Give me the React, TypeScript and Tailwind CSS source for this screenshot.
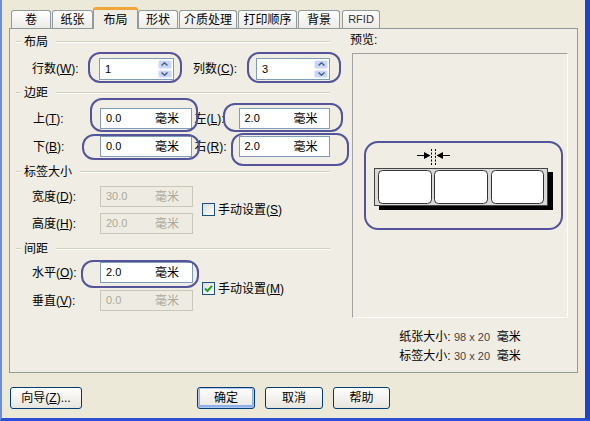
function U({ children }: { children: string }) {
  return <span className="underline">{children}</span>;
}

function Label({ cn, k, className = "" }: { cn: string; k: string; className?: string }) {
  return (
    <span className={"shrink-0 whitespace-nowrap " + className}>
      {cn}(<U>{k}</U>):
    </span>
  );
}

function GroupHeader({ title }: { title: string }) {
  return (
    <div className="flex items-center h-[14px]">
      <div className="w-[5px] h-[2px] border-t border-b border-t-[#D0D0BF] border-b-white" />
      <span className="mx-[3px] leading-[14px]">{title}</span>
      <div className="flex-1 ml-[5px] h-[2px] border-t border-b border-t-[#D0D0BF] border-b-white" />
    </div>
  );
}

function MmInput({ value, disabled = false, width = "w-[93px]" }: { value: string; disabled?: boolean; width?: string }) {
  return (
    <div
      className={
        "flex items-center h-[21px] border text-[11px] " +
        width +
        (disabled ? " bg-[#EEECE2] border-[#C9C7BA] text-[#ACA899]" : " bg-white border-[#7F9DB9] text-black")
      }
    >
      <span className="w-[54px] pl-[5px]">{value}</span>
      <span className="text-[12px]">毫米</span>
    </div>
  );
}

function Spinner({ value, width }: { value: string; width: string }) {
  return (
    <div className={"flex items-center h-[22px] border border-[#7F9DB9] bg-white " + width}>
      <span className="flex-1 pl-[5px] text-[11px]">{value}</span>
      <div className="flex flex-col w-[15px] h-full py-px pr-px gap-px">
        <div className="flex-1 bg-[#C8D7F8] border border-[#E6EEFC] rounded-[2px] flex items-center justify-center">
          <svg width="7" height="4" viewBox="0 0 7 4">
            <path d="M0.5 3.5 L3.5 0.8 L6.5 3.5" fill="none" stroke="#4D6185" strokeWidth="1.5" />
          </svg>
        </div>
        <div className="flex-1 bg-[#C8D7F8] border border-[#E6EEFC] rounded-[2px] flex items-center justify-center">
          <svg width="7" height="4" viewBox="0 0 7 4">
            <path d="M0.5 0.5 L3.5 3.2 L6.5 0.5" fill="none" stroke="#4D6185" strokeWidth="1.5" />
          </svg>
        </div>
      </div>
    </div>
  );
}

function CheckBox({ checked, text, k }: { checked: boolean; text: string; k: string }) {
  return (
    <div className="flex items-center gap-[3px]">
      <div className="w-[13px] h-[13px] border border-[#1C5180] bg-gradient-to-br from-[#DCDCD7] to-white flex items-center justify-center">
        {checked && (
          <svg width="9" height="9" viewBox="0 0 9 9">
            <path d="M1 4.5 L3.5 7 L8 1.8" fill="none" stroke="#21A121" strokeWidth="2" />
          </svg>
        )}
      </div>
      <span className="whitespace-nowrap">
        {text}(<U>{k}</U>)
      </span>
    </div>
  );
}

function Button({ children, isDefault = false, width = "w-[58px]" }: { children: React.ReactNode; isDefault?: boolean; width?: string }) {
  return (
    <button
      type="button"
      className={
        "h-[22px] rounded-[3px] border border-[#003C74] bg-gradient-to-b from-white to-[#E6E5DE] flex items-center justify-center " +
        width +
        (isDefault ? " shadow-[inset_0_0_0_1px_#B0C8F2,inset_0_-1px_0_2px_#8EB0EA]" : "")
      }
    >
      {children}
    </button>
  );
}

function Ring({ className }: { className: string }) {
  return <div className={"absolute border-2 border-[#54549A] pointer-events-none " + className} />;
}

const tabs = [
  { name: "卷", w: "w-[40px]", ml: "" },
  { name: "纸张", w: "w-[41px]", ml: "ml-px" },
  { name: "布局", w: "w-[45px]", ml: "", active: true },
  { name: "形状", w: "w-[40px]", ml: "" },
  { name: "介质处理", w: "w-[58px]", ml: "ml-px" },
  { name: "打印顺序", w: "w-[59px]", ml: "ml-px" },
  { name: "背景", w: "w-[42px]", ml: "ml-px" },
  { name: "RFID", w: "w-[38px]", ml: "ml-[2px]" },
];

export default function App() {
  return (
    <div className="relative w-[590px] h-[421px] overflow-hidden bg-[#ECE9D8] border-l-2 border-l-[#6C8EDB] border-r-[5px] border-r-[#1E43CC] border-b-[3px] border-b-[#2A4FD3] font-['Liberation_Sans','Noto_Sans_CJK_SC',sans-serif] text-[12px] text-black">
      {/* tab strip */}
      <div className="ml-[9px] pt-[7px] flex items-end h-[28px]">
        {tabs.map((t) =>
          t.active ? (
            <div
              key={t.name}
              className={"relative z-10 -mb-px h-[22px] flex items-center justify-center border border-[#919B9C] border-b-0 border-t-[3px] border-t-[#F0A43C] rounded-t-[3px] bg-[#EFEDE4] " + t.w}
            >
              {t.name}
            </div>
          ) : (
            <div
              key={t.name}
              className={"h-[18px] flex items-center justify-center border border-[#919B9C] border-b-0 rounded-t-[3px] bg-gradient-to-b from-white to-[#ECEBE6] " + t.w + " " + t.ml + (t.name === "RFID" ? " text-[11px] text-[#333]" : "")}
            >
              {t.name}
            </div>
          )
        )}
      </div>

      {/* panel */}
      <div className="ml-[7px] w-[569px] h-[345px] border border-[#919B9C] bg-[#EFEDE4] flex">
        {/* left column */}
        <div className="w-[335px] pl-[6px] pr-[15px] pt-[6px] flex flex-col">
          <GroupHeader title="布局" />
          <div className="mt-[9px] flex items-center pl-[16px]">
            <Label cn="行数" k="W" className="w-[67px]" />
            <Spinner value="1" width="w-[77px]" />
            <Label cn="列数" k="C" className="ml-[19px] w-[63px]" />
            <Spinner value="3" width="w-[76px]" />
          </div>

          <div className="mt-[6px]">
            <GroupHeader title="边距" />
          </div>
          <div className="mt-[8px] flex items-center pl-[16px]">
            <Label cn="上" k="T" className="w-[68px] pl-px" />
            <MmInput value="0.0" />
            <Label cn="左" k="L" className="ml-[3px] w-[44px]" />
            <MmInput value="2.0" />
          </div>
          <div className="mt-[7px] flex items-center pl-[16px]">
            <Label cn="下" k="B" className="w-[68px] pl-px" />
            <MmInput value="0.0" />
            <Label cn="右" k="R" className="ml-[3px] w-[44px]" />
            <MmInput value="2.0" />
          </div>

          <div className="mt-[8px]">
            <GroupHeader title="标签大小" />
          </div>
          <div className="mt-[7px] flex items-center pl-[16px]">
            <div className="flex flex-col gap-[6px]">
              <div className="flex items-center">
                <Label cn="宽度" k="D" className="w-[68px]" />
                <MmInput value="30.0" disabled />
              </div>
              <div className="flex items-center">
                <Label cn="高度" k="H" className="w-[68px]" />
                <MmInput value="20.0" disabled />
              </div>
            </div>
            <div className="ml-[9px] -mt-px">
              <CheckBox checked={false} text="手动设置" k="S" />
            </div>
          </div>

          <div className="mt-[8px]">
            <GroupHeader title="间距" />
          </div>
          <div className="mt-[6px] flex items-center pl-[16px]">
            <div className="flex flex-col gap-[7px]">
              <div className="flex items-center">
                <Label cn="水平" k="O" className="w-[68px]" />
                <MmInput value="2.0" />
              </div>
              <div className="flex items-center">
                <Label cn="垂直" k="V" className="w-[68px]" />
                <MmInput value="0.0" disabled />
              </div>
            </div>
            <div className="ml-[9px] mt-[4px]">
              <CheckBox checked text="手动设置" k="M" />
            </div>
          </div>
        </div>

        {/* right column */}
        <div className="flex-1 pl-[5px] pt-[4px] flex flex-col">
          <div className="h-[14px] leading-[14px]">预览:</div>
          <div className="ml-[2px] mt-[6px] w-[216px] h-[265px] border border-t-[#A0A0A0] border-l-[#A0A0A0] border-b-white border-r-white flex items-center justify-center">
            <svg width="184" height="64" viewBox="0 0 184 64" className="ml-[6px] -mt-[14px]">
              <rect x="8" y="25" width="174" height="38" fill="#000" />
              <rect x="3.5" y="21.5" width="173" height="37" fill="#D9D9D9" stroke="#444" />
              <rect x="7.5" y="23.5" width="53" height="33" rx="4" fill="#fff" stroke="#333" />
              <rect x="63.5" y="23.5" width="53" height="33" rx="4" fill="#fff" stroke="#333" />
              <rect x="120.5" y="23.5" width="52" height="33" rx="4" fill="#fff" stroke="#333" />
              <line x1="60.5" y1="2" x2="60.5" y2="18" stroke="#000" strokeDasharray="2 1.5" />
              <line x1="64.5" y1="2" x2="64.5" y2="18" stroke="#000" strokeDasharray="2 1.5" />
              <line x1="46" y1="8.5" x2="54" y2="8.5" stroke="#000" />
              <path d="M53 5 L59.5 8.5 L53 12 Z" fill="#000" />
              <line x1="71" y1="8.5" x2="79" y2="8.5" stroke="#000" />
              <path d="M72 5 L65.5 8.5 L72 12 Z" fill="#000" />
            </svg>
          </div>
          <div className="mt-[12px] ml-[2px] w-[216px] flex flex-col items-center gap-[5px]">
            <div className="h-[14px] leading-[14px] whitespace-nowrap">
              纸张大小: <span className="text-[11px] text-[#4B3F3F]">98 x 20</span>&nbsp; 毫米
            </div>
            <div className="h-[14px] leading-[14px] whitespace-nowrap">
              标签大小: <span className="text-[11px] text-[#4B3F3F]">30 x 20</span>&nbsp; 毫米
            </div>
          </div>
        </div>
      </div>

      {/* bottom buttons */}
      <div className="mt-[14px] flex items-center">
        <div className="ml-[8px]">
          <Button width="w-[72px]">
            <span>
              向导(<U>Z</U>)...
            </span>
          </Button>
        </div>
        <div className="ml-[115px] flex gap-[10px]">
          <Button isDefault>确定</Button>
          <Button>取消</Button>
          <Button width="w-[57px]">帮助</Button>
        </div>
      </div>

      {/* hand-drawn annotation rings */}
      <Ring className="left-[86px] top-[52px] w-[94px] h-[31px] rounded-[12px]" />
      <Ring className="left-[245px] top-[52px] w-[94px] h-[31px] rounded-[12px]" />
      <Ring className="left-[88px] top-[98px] w-[108px] h-[34px] rounded-[12px]" />
      <Ring className="left-[221px] top-[103px] w-[120px] h-[29px] rounded-[12px]" />
      <Ring className="left-[80px] top-[134px] w-[118px] h-[26px] rounded-[12px]" />
      <Ring className="left-[229px] top-[133px] w-[118px] h-[33px] rounded-[12px]" />
      <Ring className="left-[79px] top-[260px] w-[118px] h-[28px] rounded-[12px]" />
      <Ring className="left-[362px] top-[141px] w-[199px] h-[89px] rounded-[14px]" />
    </div>
  );
}
